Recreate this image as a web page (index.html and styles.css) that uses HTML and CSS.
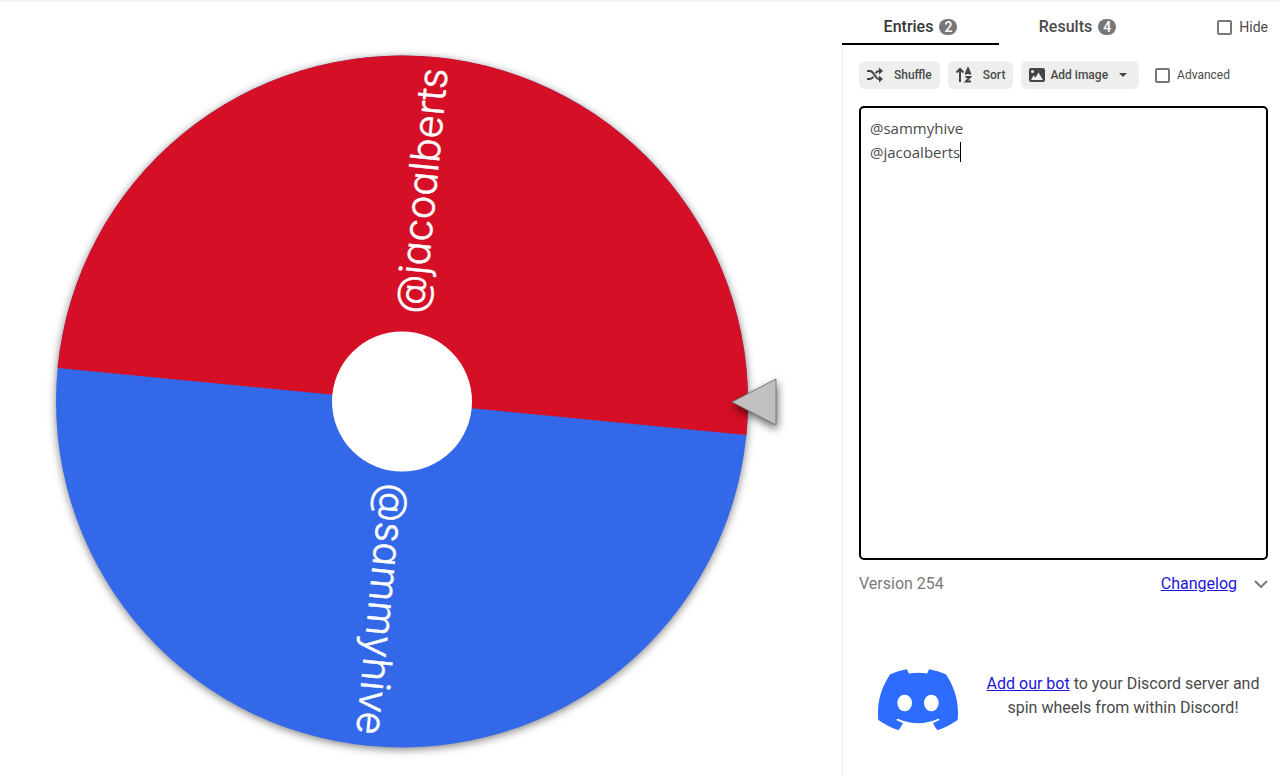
FILE: index.html
```html
<!DOCTYPE html>
<html lang="en">
<head>
    <meta charset="UTF-8">
    <meta name="viewport" content="width=device-width, initial-scale=1.0">
    <title>Wheel of Names</title>

    <link rel="stylesheet" href="styles.css">
</head>
<body>
    <main>
        <section class="wheel">
            <svg viewBox="0 0 842 774" role="img" aria-label="Wheel">
                <g class="disc">
                    <circle cx="402" cy="399.5" r="346" fill="#3369e8"/>
                    <path d="M57.6 366A346 346 0 0 1 746.4 433Z" fill="#d50f25"/>
                </g>
                <text class="name" x="737" y="413" text-anchor="end" transform="rotate(-84.45 402 399.5)">@jacoalberts</text>
                <text class="name" x="737" y="413" text-anchor="end" transform="rotate(95.55 402 399.5)">@sammyhive</text>
                <circle cx="402" cy="399.5" r="70" fill="white"/>
                <path class="pointer" d="M732 400L776 377V423Z"/>
            </svg>
        </section>

        <aside>
            <header class="tabs">
                <button class="tab active">Entries <span class="count">2</span></button>
                <button class="tab">Results <span class="count">4</span></button>
                <label class="check hide"><input type="checkbox"> Hide</label>
            </header>

            <div class="panel">
                <div class="tools">
                    <button class="tool">
                        <svg class="icon" viewBox="0 0 16 16">
                            <path class="line" d="M0 4H3C7 4 8 12 12 12H13M0 12H3C4.500 12 5.500 11 6.200 9.800M8.500 6.200C9.400 4.900 10.500 4 12 4H13"/>
                            <path d="M12 0.500L16 4L12 7.500ZM12 8.500L16 12L12 15.500Z"/>
                        </svg>
                        Shuffle
                    </button>
                    <button class="tool">
                        <svg class="icon" viewBox="0 0 16 16">
                            <path class="line" d="M4 15V2M0.500 5.500L4 2L7.500 5.500M9.500 7.500L12 1.500L14.500 7.500M10.500 6H13.500M9.500 10H14L10 14.500H15"/>
                        </svg>
                        Sort
                    </button>
                    <button class="tool image">
                        <svg class="icon" viewBox="0 0 16 16">
                            <path fill-rule="evenodd" d="M2 1H14A2 2 0 0 1 16 3V13A2 2 0 0 1 14 15H2A2 2 0 0 1 0 13V3A2 2 0 0 1 2 1ZM2 13H14L9.500 5.500L6.500 10.500L4.500 8.500ZM3.500 3A1.500 1.500 0 1 0 3.500 6A1.500 1.500 0 1 0 3.500 3Z"/>
                        </svg>
                        Add image
                        <svg class="arrow" viewBox="0 0 8 4"><path d="M0 0H8L4 4Z"/></svg>
                    </button>
                    <label class="check"><input type="checkbox"> Advanced</label>
                </div>

                <div class="entries">
                    <textarea rows="18" aria-label="Entries" spellcheck="false">@sammyhive
@jacoalberts</textarea>
                    <span class="caret"></span>
                </div>

                <div class="version">
                    <span>Version 254</span>
                    <a href="#">Changelog</a>
                    <svg viewBox="0 0 14 8"><path d="M1 1L7 7L13 1"/></svg>
                </div>

                <div class="discord">
                    <svg viewBox="0 2.800 24 18.400">
                        <path d="M20.317 4.3698a19.7913 19.7913 0 00-4.8851-1.5152.0741.0741 0 00-.0785.0371c-.211.3753-.4447.8648-.6083 1.2495-1.8447-.2762-3.68-.2762-5.4868 0-.1636-.3933-.4058-.8742-.6177-1.2495a.077.077 0 00-.0785-.037 19.7363 19.7363 0 00-4.8852 1.515.0699.0699 0 00-.0321.0277C.5334 9.0458-.319 13.5799.0992 18.0578a.0824.0824 0 00.0312.0561c2.0528 1.5076 4.0413 2.4228 5.9929 3.0294a.0777.0777 0 00.0842-.0276c.4616-.6304.8731-1.2952 1.226-1.9942a.076.076 0 00-.0416-.1057c-.6528-.2476-1.2743-.5495-1.8722-.8923a.077.077 0 01-.0076-.1277c.1258-.0943.2517-.1923.3718-.2914a.0743.0743 0 01.0776-.0105c3.9278 1.7933 8.18 1.7933 12.0614 0a.0739.0739 0 01.0785.0095c.1202.099.246.1981.3728.2924a.077.077 0 01-.0066.1276 12.2986 12.2986 0 01-1.873.8914.0766.0766 0 00-.0407.1067c.3604.698.7719 1.3628 1.225 1.9932a.076.076 0 00.0842.0286c1.961-.6067 3.9495-1.5219 6.0023-3.0294a.077.077 0 00.0313-.0552c.5004-5.177-.8382-9.6739-3.5485-13.6604a.061.061 0 00-.0312-.0286z"/>
                        <ellipse cx="8" cy="13" rx="2.200" ry="2.500"/>
                        <ellipse cx="16" cy="13" rx="2.200" ry="2.500"/>
                    </svg>
                    <p><a href="#">Add our bot</a> to your Discord server and spin wheels from within Discord!</p>
                </div>
            </div>
        </aside>
    </main>
</body>
</html>
```
FILE: styles.css
```css
* {
    box-sizing: border-box;
}

body {
    margin: 0;
    border-top: 2px solid #f5f5f5;
    background-color: white;
    color: #4a4a4a;
    font-family: Roboto, sans-serif;
    font-size: 16px;
    line-height: 24px;
}

main {
    display: grid;
    grid-template-columns: minmax(0, 1fr) 438px;
}

button {
    border: 0;
    color: inherit;
    font-family: inherit;
    cursor: pointer;
}

a {
    color: #2015d8;
    text-decoration: underline;
}

.wheel svg {
    display: block;
    width: 100%;
}

.disc {
    filter: drop-shadow(0 2px 4px rgba(0,0,0,0.5));
}

.name {
    fill: white;
    stroke: white;
    stroke-width: 0.5;
    font-family: Inter, sans-serif;
    font-size: 40px;
    font-weight: 300;
    font-feature-settings: "cv11";
}

.pointer {
    fill: silver;
    stroke: #777;
    filter: drop-shadow(1px 4px 4px rgba(0,0,0,0.6));
}

aside {
    display: flex;
    flex-direction: column;
}

.tabs {
    display: flex;
    align-items: center;
    padding-right: 12px;
}

.tab {
    display: flex;
    align-items: center;
    justify-content: center;
    gap: 6px;
    width: 157px;
    height: 43px;
    padding: 8px 0 0;
    border-bottom: 2px solid transparent;
    background: none;
    font-size: 16px;
    font-weight: 500;
}

.tab.active {
    border-color: black;
    color: #363636;
}

.count {
    padding: 0 5px;
    border-radius: 8px;
    background-color: #777;
    color: white;
    font-size: 14px;
    line-height: 16px;
}

.check {
    display: flex;
    align-items: center;
    gap: 7px;
    font-size: 12px;
}

.check input {
    appearance: none;
    width: 15px;
    height: 15px;
    margin: 0;
    border: 2px solid #777;
    border-radius: 2px;
}

.hide {
    margin-left: auto;
    padding-top: 7px;
    font-size: 14px;
}

.panel {
    display: flex;
    flex-direction: column;
    flex-grow: 1;
    padding: 16px 12px 16px 16px;
    border-left: 1px solid #eee;
}

.tools {
    display: flex;
    gap: 8px;
    margin-bottom: 17px;
}

.tool {
    display: flex;
    align-items: center;
    gap: 11px;
    height: 28px;
    padding: 0 8px;
    border-radius: 6px;
    background-color: #eee;
    font-size: 12px;
    font-weight: 500;
}

.tool.image {
    gap: 5px;
    padding-right: 12px;
}

.tools .check {
    margin-left: 8px;
}

.icon {
    width: 16px;
    height: 16px;
    fill: #444;
}

.icon .line {
    fill: none;
    stroke: #444;
    stroke-width: 2;
}

.arrow {
    width: 8px;
    height: 4px;
    margin-left: 6px;
    fill: #444;
}

.entries {
    position: relative;
}

textarea {
    display: block;
    width: 100%;
    padding: 8px 9px 10px;
    border: 2px solid black;
    border-radius: 5px;
    outline: none;
    color: #4a4a4a;
    font-family: "Open Sans", sans-serif;
    font-size: 15px;
    line-height: 24px;
    resize: none;
}

/* text cursor at the end of the second entry */
.caret {
    position: absolute;
    top: 36px;
    left: 101px;
    width: 1px;
    height: 20px;
    background-color: black;
}

.version {
    display: flex;
    align-items: center;
    gap: 17px;
    margin-top: 12px;
    color: #7a7a7a;
}

.version a {
    margin-left: auto;
}

.version svg {
    width: 14px;
    height: 8px;
    fill: none;
    stroke: #777;
    stroke-width: 2;
}

.discord {
    display: flex;
    align-items: center;
    gap: 20px;
    margin-top: 73px;
    padding-left: 19px;
}

.discord svg {
    flex: none;
    width: 80px;
    fill: #2e6bff;
}

.discord ellipse {
    fill: white;
}

.discord p {
    flex-grow: 1;
    margin: 0;
    padding-bottom: 8px;
    text-align: center;
}
```
